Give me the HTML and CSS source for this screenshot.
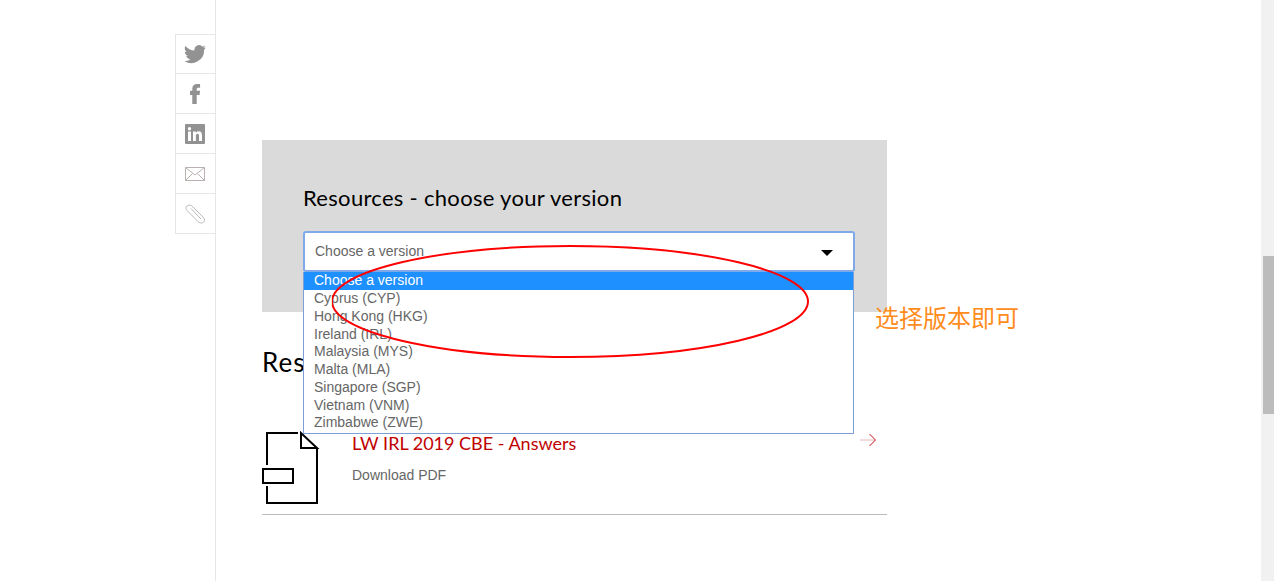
FILE: index.html
```html
<!DOCTYPE html>
<html lang="en">
<head>
<meta charset="utf-8">
<title>Resources</title>
<link rel="stylesheet" href="styles.css">
</head>
<body>
<div class="page">
  <aside class="side">
    <ul class="social">
      <li class="social-item"><svg class="ico" viewBox="0 0 24 24" width="22" height="22"><path fill="#929292" d="M23.6 4.5c-.9.4-1.8.6-2.8.8 1-.6 1.8-1.5 2.1-2.7-.9.6-2 1-3.100 1.200A4.900 4.900 0 0 0 11.500 8.300C7.500 8.100 3.900 6.200 1.500 3.200c-1.300 2.200-.7 5.100 1.500 6.600-.8 0-1.500-.2-2.200-.6 0 2.400 1.700 4.400 3.900 4.900-.7.200-1.500.2-2.200.1.600 2 2.400 3.400 4.600 3.400A9.900 9.900 0 0 1 .4 19.600 13.900 13.900 0 0 0 21.900 7.300c.7-.7 1.300-1.700 1.700-2.800z"/></svg></li>
      <li class="social-item"><svg class="ico" viewBox="0 0 12 24" width="11" height="22"><path fill="#929292" d="M2.500 23V13H0V8.500h2.500V6C2.500 2.800 4.500 1 7.800 1c1.500 0 2.800.1 3.200.2v4H9c-1.300 0-1.700.7-1.700 1.800v1.500H11l-.6 4.500H7.300v10z"/></svg></li>
      <li class="social-item"><svg class="ico" viewBox="0 0 20 20" width="20" height="20"><rect width="20" height="20" rx="1" fill="#929292"/><path fill="#fff" d="M3 7.500h3V17H3zM4.500 3a1.700 1.700 0 1 1 0 3.400 1.700 1.700 0 0 1 0-3.400zM8 7.500h2.800v1.300c.5-.9 1.500-1.500 2.900-1.500 2.600 0 3.300 1.700 3.300 4.200V17h-3v-5c0-1.300-.3-2.200-1.500-2.200-1.300 0-1.600 1-1.600 2.200v5H8z"/></svg></li>
      <li class="social-item"><svg class="ico" viewBox="0 0 20 14" width="20" height="14"><path fill="none" stroke="#b9b2b0" d="M.5.500h19v13H.5zM.5.500 10 8l9.500-7.500M.5 13.500 7.500 6.500M19.500 13.500 12.500 6.500"/></svg></li>
      <li class="social-item"><svg class="ico" viewBox="0 0 20 20" width="20" height="20"><path fill="none" stroke="#bdb9b9" d="M2 6.500 13 17.500C15 19.500 18 19.500 19 17.500 20 15.500 19 14 18 13L8 3C6 1 3.500.5 2 2 .5 3.500.5 5 2 6.500M6 4.500 16 15"/></svg></li>
    </ul>
  </aside>

  <main class="main">
    <section class="panel">
      <h2 class="panel-title">Resources - choose your version</h2>
      <div class="picker">
        <div class="select">
          <span>Choose a version</span>
          <span class="caret"></span>
        </div>
        <ul class="options">
          <li class="option option-active">Choose a version</li>
          <li class="option">Cyprus (CYP)</li>
          <li class="option">Hong Kong (HKG)</li>
          <li class="option">Ireland (IRL)</li>
          <li class="option">Malaysia (MYS)</li>
          <li class="option">Malta (MLA)</li>
          <li class="option">Singapore (SGP)</li>
          <li class="option">Vietnam (VNM)</li>
          <li class="option">Zimbabwe (ZWE)</li>
        </ul>
      </div>
    </section>

    <h2 class="results-title">Results</h2>

    <article class="result">
      <svg class="file-icon" viewBox="0 0 58 74" width="58" height="74">
        <path fill="none" stroke="#000" stroke-width="2" d="M5 35V3h31M39 3v15h16zM55 18v55H5V56"/>
        <rect x="1" y="39" width="30" height="14" fill="none" stroke="#000" stroke-width="2"/>
      </svg>
      <div class="result-body">
        <a class="result-title">LW IRL 2019 CBE - Answers</a>
        <p class="result-sub">Download PDF</p>
      </div>
      <svg class="arrow" viewBox="0 0 17 14" width="17" height="14">
        <path fill="none" stroke="#e3b6b6" d="M0 7h15"/>
        <path fill="none" stroke="#c8101e" d="M9.500 1l6 6-6 6"/>
      </svg>
    </article>
  </main>

  <div class="scrollbar"><div class="thumb"></div></div>
</div>

<svg class="annotation" viewBox="0 0 480 116" width="480" height="116">
  <ellipse cx="238" cy="56.500" rx="238" ry="55.500" fill="none" stroke="#f00" stroke-width="2"/>
</svg>
<p class="note">选择版本即可</p>
</body>
</html>
```

FILE: styles.css
```css
* { box-sizing: border-box; }
html, body { margin: 0; padding: 0; height: 581px; overflow: hidden; background: #fff; }
body { position: relative; font-family: "Liberation Sans", Arial, sans-serif; color: #666; }
ul { list-style: none; margin: 0; padding: 0; }

.page { display: flex; height: 581px; overflow: hidden; }

.side { flex: 0 0 216px; padding: 34px 0 0 175px; border-right: 1px solid #e6e6e6; }
.social { width: 40px; border-top: 1px solid #e6e6e6; }
.social-item { display: flex; align-items: center; justify-content: center; height: 40px; padding-right: 1px; border-left: 1px solid #e6e6e6; border-bottom: 1px solid #e6e6e6; }
.social-item:first-child { height: 39px; }
.ico { display: block; }

.main { flex: 1; padding: 140px 0 0 46px; min-width: 0; }

.panel { width: 625px; height: 172px; padding: 45px 32px 0 41px; background: #dadada; }
.panel-title { margin: 0 0 20px; font: 400 22px/26px "Lato", sans-serif; letter-spacing: 0.3px; color: #000; }

.picker { position: relative; }
.select { display: flex; align-items: center; justify-content: space-between; height: 41px; padding: 0 20px 2px 10px; background: #fff; border: 2px solid #7fa9e8; border-radius: 3px; font-size: 14px; color: #666; }
.caret { width: 0; height: 0; margin-top: 4px; border-left: 6px solid transparent; border-right: 6px solid transparent; border-top: 6px solid #000; }

.options { position: absolute; z-index: 2; left: 0; top: 41px; width: 551px; height: 162px; background: #fff; border: 1px solid #7d9ed6; border-top: 0; font-size: 14px; }
.option { height: 17.750px; padding-left: 10px; line-height: 16px; color: #666; }
.option-active { height: 18px; background: #1e90ff; color: #fff; }

.results-title { margin: 35px 0 0; font: 400 26px/30px "Lato", sans-serif; letter-spacing: 1px; color: #000; }

.result { display: flex; width: 625px; height: 106px; margin-top: 32px; padding-top: 22px; border-bottom: 1px solid #bbb; align-items: flex-start; }
.file-icon { flex: none; display: block; margin-top: -1px; }
.result-body { flex: 1; padding: 0 0 0 32px; }
.result-title { display: block; font: 400 18px/24px "Lato", sans-serif; color: #c00000; }
.result-sub { margin: 10px 0 0; font-size: 14px; line-height: 20px; color: #666; }
.arrow { flex: none; margin: 2px 10px 0 0; }

.scrollbar { flex: 0 0 13px; padding: 256px 0 0 2px; background: #f1f1f1; }
.thumb { height: 158px; background: #bcbcbc; }

.annotation { position: absolute; left: 332px; top: 245px; z-index: 5; }
.note { position: absolute; left: 875px; top: 302px; margin: 0; z-index: 5; font: 400 24px/30px "Noto Sans CJK SC", sans-serif; color: #ff8c1a; }
```
